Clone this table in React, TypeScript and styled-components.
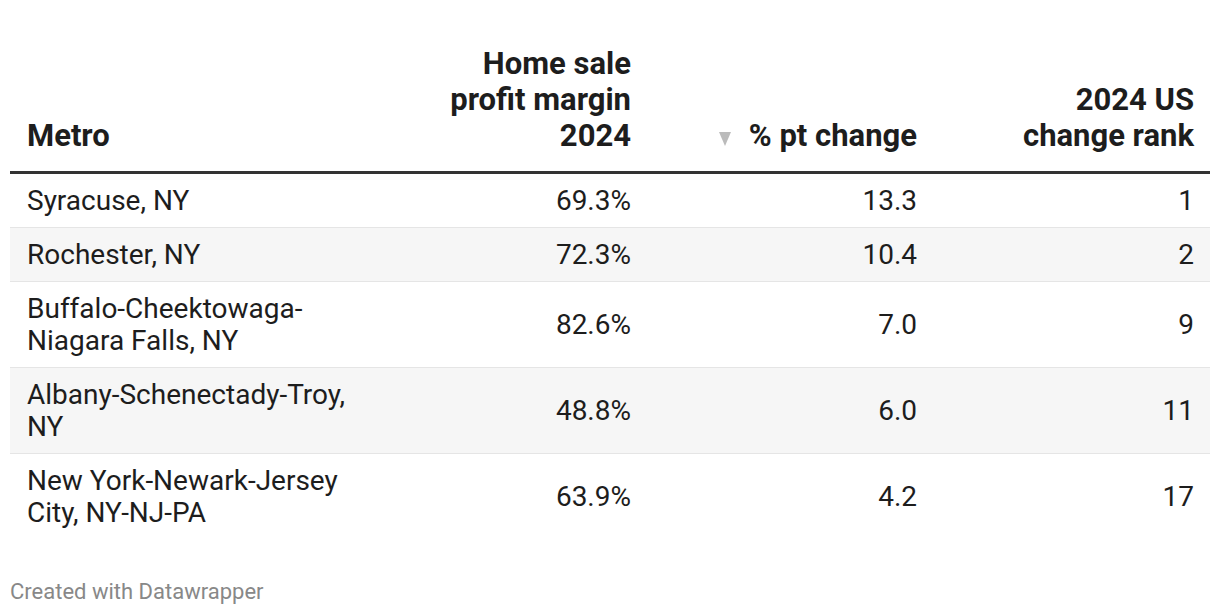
import React from "react";
import styled, { createGlobalStyle } from "styled-components";

const Global = createGlobalStyle`
  html, body { margin: 0; padding: 0; background: #ffffff; }
  body { font-family: Roboto, "Liberation Sans", Arial, sans-serif; color: #1d1d1d; }
`;

const Page = styled.div`
  padding: 46px 10px 0 10px;
  width: 1200px;
`;

const Table = styled.table`
  width: 1200px;
  border-collapse: collapse;
  table-layout: fixed;
`;

const Col = styled.col<{ $w: number }>`
  width: ${(p) => p.$w}px;
`;

const HeadCell = styled.th<{ $align?: "left" | "right"; $last?: boolean; $first?: boolean }>`
  font-size: 31px;
  font-weight: 700;
  line-height: 36px;
  text-align: ${(p) => p.$align ?? "right"};
  vertical-align: bottom;
  color: #1d1d1d;
  padding: 0 ${(p) => (p.$last ? 16 : 8)}px 17px ${(p) => (p.$first ? 17 : 8)}px;
  border-bottom: 3px solid #333333;
  white-space: nowrap;
`;

const SortArrow = styled.svg`
  display: inline-block;
  width: 12px;
  height: 14px;
  margin-right: 18px;
  vertical-align: 0px;
`;

const Row = styled.tr<{ $shaded: boolean; $last?: boolean }>`
  background: ${(p) => (p.$shaded ? "#f6f6f6" : "#ffffff")};
  border-bottom: ${(p) => (p.$last ? "none" : "1px solid #e5e5e5")};
`;

const Cell = styled.td<{ $align?: "left" | "right"; $last?: boolean; $first?: boolean }>`
  font-size: 28px;
  font-weight: 400;
  line-height: 32px;
  color: #1d1d1d;
  text-align: ${(p) => p.$align ?? "right"};
  vertical-align: middle;
  padding: 11px ${(p) => (p.$last ? 16 : 8)}px 10px ${(p) => (p.$first ? 17 : 8)}px;
`;

const Footer = styled.div`
  margin-top: 40px;
  font-size: 22px;
  line-height: 26px;
  color: #888888;
`;

type Datum = { metro: string; margin: string; change: string; rank: string };

const data: Datum[] = [
  { metro: "Syracuse, NY", margin: "69.3%", change: "13.3", rank: "1" },
  { metro: "Rochester, NY", margin: "72.3%", change: "10.4", rank: "2" },
  { metro: "Buffalo-Cheektowaga-Niagara Falls, NY", margin: "82.6%", change: "7.0", rank: "9" },
  { metro: "Albany-Schenectady-Troy, NY", margin: "48.8%", change: "6.0", rank: "11" },
  { metro: "New York-Newark-Jersey City, NY-NJ-PA", margin: "63.9%", change: "4.2", rank: "17" },
];

export default function App() {
  return (
    <Page>
      <Global />
      <Table>
        <colgroup>
          <Col $w={370} />
          <Col $w={259} />
          <Col $w={286} />
          <Col $w={285} />
        </colgroup>
        <thead>
          <tr>
            <HeadCell $align="left" $first>Metro</HeadCell>
            <HeadCell>
              Home sale
              <br />
              profit margin
              <br />
              2024
            </HeadCell>
            <HeadCell>
              <SortArrow viewBox="0 0 12 14">
                <path d="M0 0 L12 0 L6 14 Z" fill="#bbbbbb" />
              </SortArrow>
              % pt change
            </HeadCell>
            <HeadCell $last>
              2024 US
              <br />
              change rank
            </HeadCell>
          </tr>
        </thead>
        <tbody>
          {data.map((d, i) => (
            <Row key={d.metro} $shaded={i % 2 === 1} $last={i === data.length - 1}>
              <Cell $align="left" $first>{d.metro}</Cell>
              <Cell>{d.margin}</Cell>
              <Cell>{d.change}</Cell>
              <Cell $last>{d.rank}</Cell>
            </Row>
          ))}
        </tbody>
      </Table>
      <Footer>Created with Datawrapper</Footer>
    </Page>
  );
}
